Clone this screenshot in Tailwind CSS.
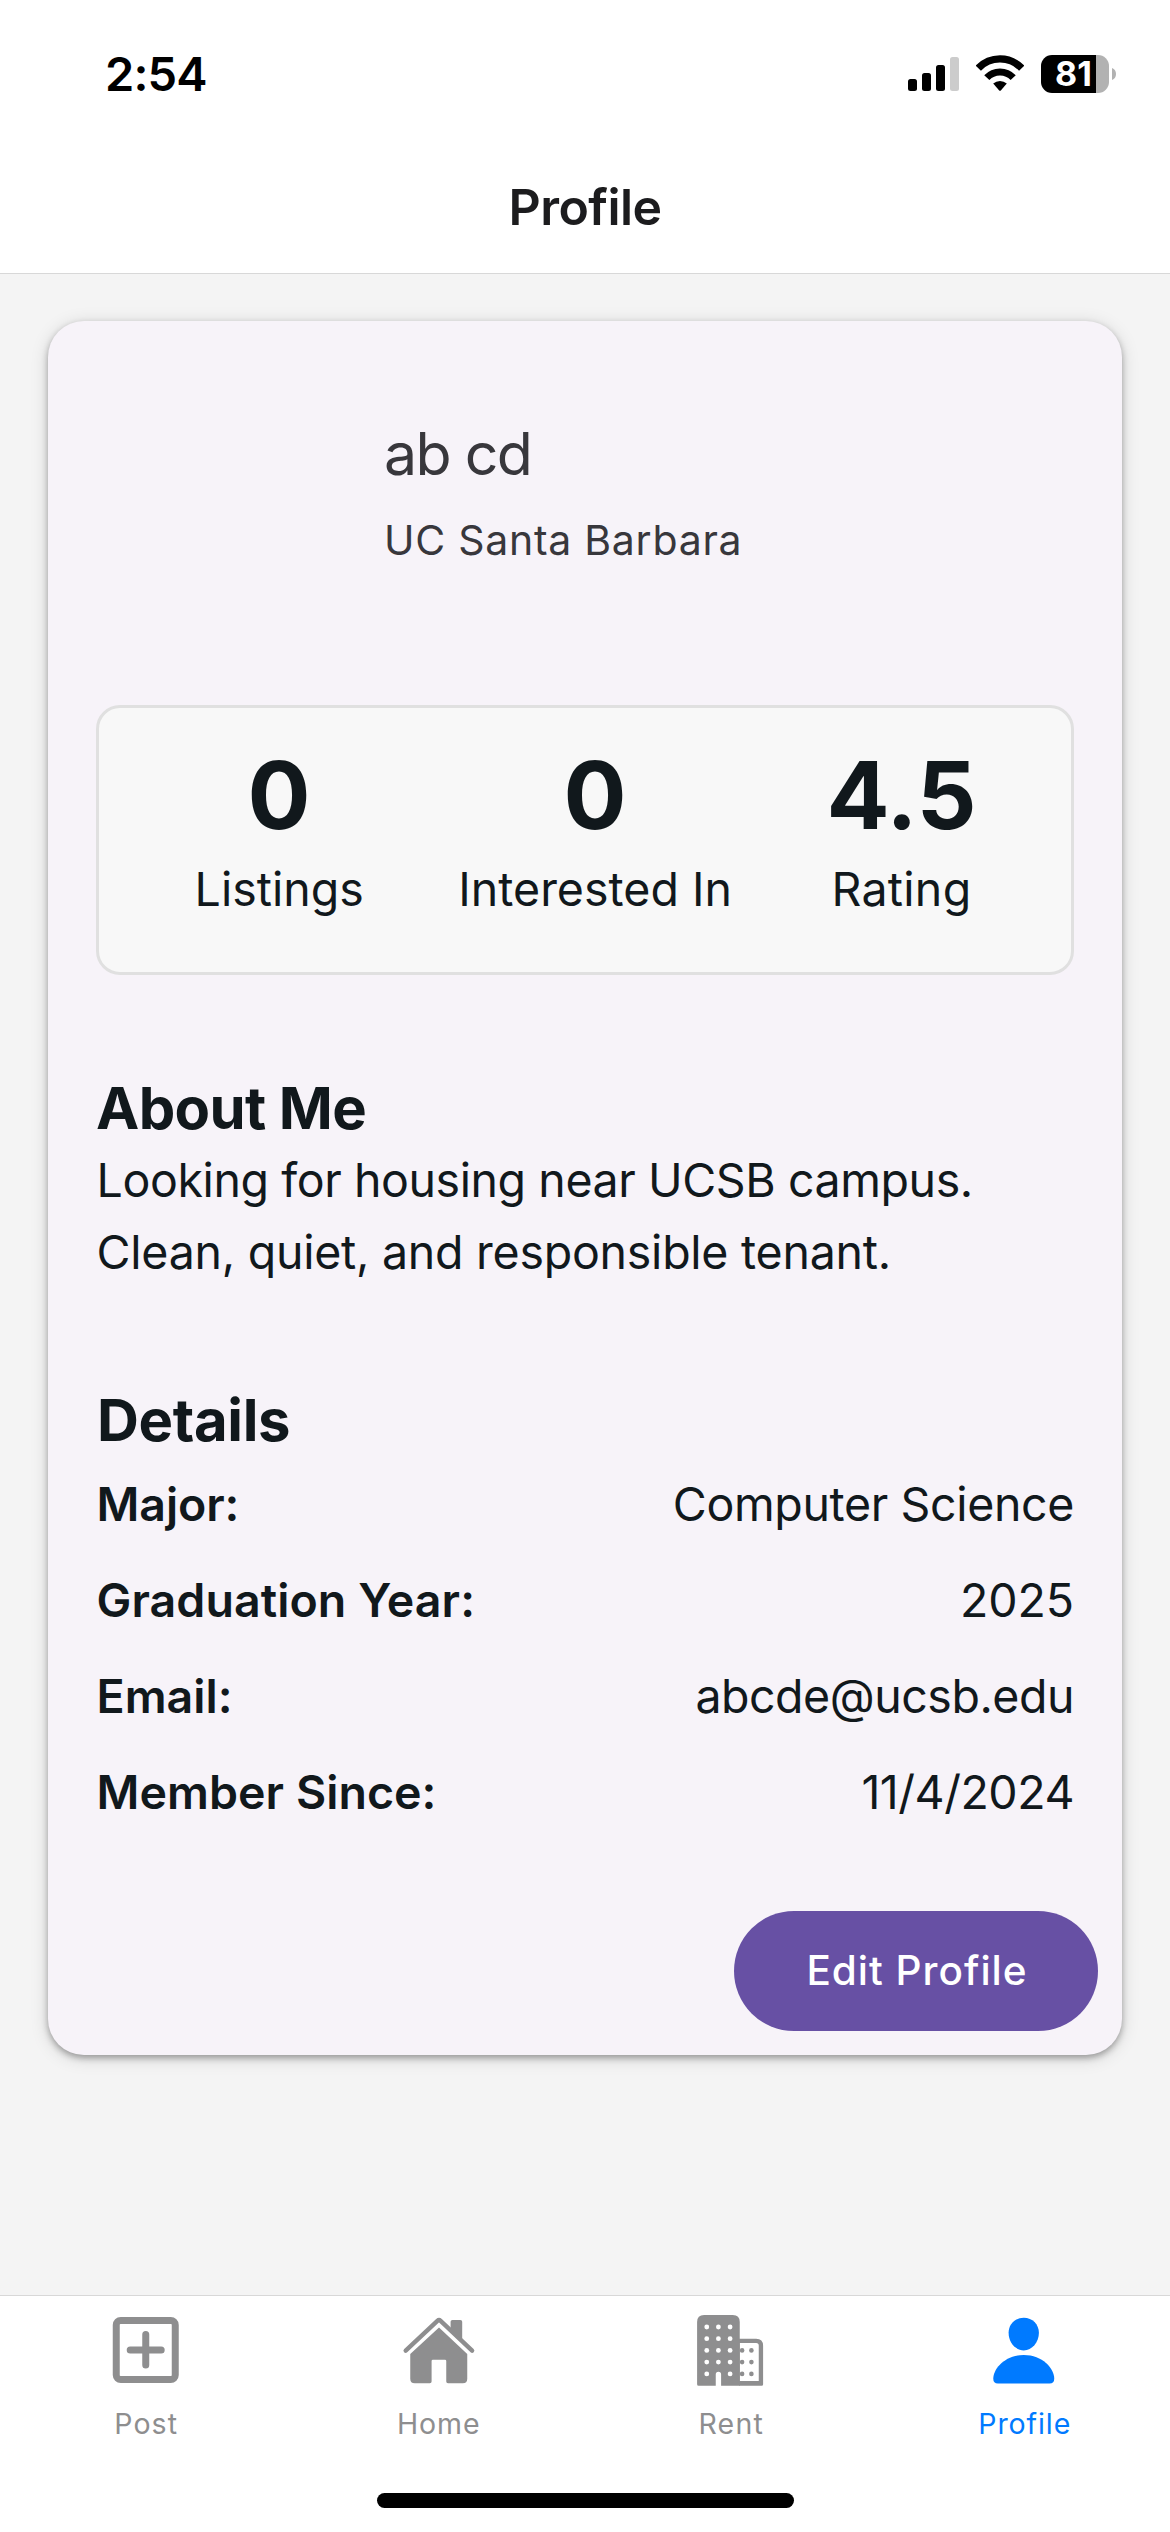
<!DOCTYPE html>
<html lang="en">
<head>
<meta charset="utf-8">
<title>Profile</title>
<script src="https://cdn.jsdelivr.net/npm/@tailwindcss/browser@4"></script>
</head>
<body class="font-['Inter',sans-serif] bg-white">
<div class="w-[1170px] h-[2532px] flex flex-col overflow-hidden bg-[#f4f4f4] text-[#11181c]">

  <!-- Status bar -->
  <div class="h-[141px] shrink-0 bg-white text-black flex items-start justify-between pl-[105px] pr-[54px]">
    <span class="mt-[44px] text-[47px] leading-[60px] font-semibold tracking-[-0.88px]">2:54</span>
    <div class="flex items-start mt-[55px]">
      <svg class="w-[51px] h-[34px] mt-[2px]" viewBox="0 0 51 34">
        <rect x="0" y="22" width="9" height="12" rx="2.5"/>
        <rect x="14" y="16" width="9" height="18" rx="2.5"/>
        <rect x="28" y="8" width="9" height="26" rx="2.5"/>
        <rect x="42" y="0" width="9" height="34" rx="2.5" fill="#cccccc"/>
      </svg>
      <svg class="w-[48px] h-[36px] ml-[17px]" viewBox="0 0 48 36">
        <g fill="none" stroke="#000">
          <path d="M2.3 13.2A30 30 0 0 1 45.7 13.2" stroke-width="7.3"/>
          <path d="M10.8 22.7A18 18 0 0 1 37.2 22.7" stroke-width="7"/>
        </g>
        <path d="M17.2 28.6A10.5 10.5 0 0 1 30.8 28.6L24.8 35.4Q24 36.2 23.2 35.4Z"/>
      </svg>
      <div class="ml-[17px] w-[68px] h-[38px] rounded-[11px] bg-linear-to-r from-black from-[81%] to-[#b2b2b2] to-[81%] text-white pl-[14px] text-[34px] leading-[38px] font-bold whitespace-nowrap">81</div>
      <svg class="w-[4px] h-[12px] ml-[3px] mt-[13px]" viewBox="0 0 4 12"><path d="M0 0Q4 1.5 4 6T0 12Z" fill="#b2b2b2"/></svg>
    </div>
  </div>

  <!-- Navigation header -->
  <div class="h-[133px] shrink-0 bg-white border-b border-[#d8d8d8] flex items-center justify-center">
    <h1 class="text-[50px] leading-[60px] font-semibold tracking-[-0.56px] text-[#1c1c1e]">Profile</h1>
  </div>

  <!-- Content -->
  <main class="flex-1 px-[48px] pt-[47px]">
    <div class="h-[1734px] rounded-[36px] bg-[#f7f3f9] shadow-[0_3px_18px_rgba(0,0,0,0.15),0_3px_6px_rgba(0,0,0,0.3)] flex flex-col pt-[91px] px-[48px]">
      <div class="pl-[288px] text-[#38373c]">
        <div class="text-[59px] leading-[84px] tracking-[-1.7px]">ab cd</div>
        <div class="mt-[14px] text-[41px] leading-[60px] tracking-[0.73px]">UC Santa Barbara</div>
      </div>

      <div class="mt-[135px] h-[270px] rounded-[24px] border-[3px] border-[#e0e0e0] bg-[#f8f8f8] flex justify-evenly pt-[28px] pl-px text-center">
        <div>
          <div class="text-[93.5px] leading-[118px] font-bold">0</div>
          <div class="text-[46.5px] leading-[70px]">Listings</div>
        </div>
        <div>
          <div class="text-[93.5px] leading-[118px] font-bold">0</div>
          <div class="text-[46.5px] leading-[70px]">Interested In</div>
        </div>
        <div>
          <div class="text-[93.5px] leading-[118px] font-bold tracking-[-0.21px]">4.5</div>
          <div class="text-[46.5px] leading-[70px] tracking-[0.3px]">Rating</div>
        </div>
      </div>

      <h2 class="mt-[97px] text-[58px] leading-[72px] font-bold tracking-[-0.62px]">About Me</h2>
      <p class="text-[46.5px] leading-[72px] whitespace-nowrap pl-[0.6px]"><span class="tracking-[-0.41px]">Looking for housing near UCSB campus.</span><br><span class="tracking-[-0.25px]">Clean, quiet, and responsible tenant.</span></p>

      <h2 class="mt-[96px] text-[58px] leading-[72px] font-bold tracking-[-0.34px] pl-px">Details</h2>
      <div class="mt-[12px] flex flex-col gap-[24px] text-[46.5px] leading-[72px] pl-[0.6px]">
        <div class="flex justify-between"><span class="font-semibold tracking-[-0.11px]">Major:</span><span class="tracking-[-0.36px]">Computer Science</span></div>
        <div class="flex justify-between"><span class="font-semibold tracking-[0.07px]">Graduation Year:</span><span class="tracking-[-0.08px]">2025</span></div>
        <div class="flex justify-between"><span class="font-semibold">Email:</span><span class="tracking-[-0.47px]">abcde@ucsb.edu</span></div>
        <div class="flex justify-between"><span class="font-semibold tracking-[0.05px]">Member Since:</span><span class="tracking-[-0.46px]">11/4/2024</span></div>
      </div>

      <button class="mt-[83px] -mr-[24px] self-end w-[364px] h-[120px] rounded-full bg-[#6750a4] text-white text-[40.5px] leading-[60px] font-medium tracking-[0.99px] pl-[2px]">Edit Profile</button>
    </div>
  </main>

  <!-- Tab bar -->
  <nav class="h-[237px] shrink-0 bg-white border-t border-[#d8d8d8] flex flex-col items-center">
    <div class="w-full grid grid-cols-4 pt-[12px] text-[28.5px] leading-[36px] text-[#8e8e8f]">
      <div class="flex flex-col items-center">
        <svg class="w-[84px] h-[84px]" viewBox="0 0 84 84" fill="currentColor">
          <path fill-rule="evenodd" d="M16.75 9H66.75A8 8 0 0 1 74.75 17V67A8 8 0 0 1 66.75 75H16.75A8 8 0 0 1 8.75 67V17A8 8 0 0 1 16.75 9ZM16.5 16Q15.75 16 15.75 16.8V67.2Q15.75 68 16.5 68H67Q67.75 68 67.75 67.2V16.8Q67.75 16 67 16Z"/>
          <path d="M26.2 42H57.2M41.75 26.5V57" fill="none" stroke="currentColor" stroke-width="7" stroke-linecap="round"/>
        </svg>
        <span class="mt-[14px] tracking-[1.14px]">Post</span>
      </div>
      <div class="flex flex-col items-center">
        <svg class="w-[84px] h-[84px]" viewBox="0 0 84 84" fill="currentColor">
          <path d="M8.7 42.7L40.4 12.9Q42 11.4 43.6 12.9L75.1 42.7" fill="none" stroke="currentColor" stroke-width="4.4" stroke-linecap="round" stroke-linejoin="round"/>
          <path d="M53.6 21.5V13.8Q53.6 12 55.4 12H63.4Q65.2 12 65.2 13.8V33Z"/>
          <path d="M42 19.5L70.25 46V70.8Q70.25 75.3 65.75 75.3H51Q49.25 75.3 49.25 73.5V53Q49.25 51.7 48 51.7H35.9Q34.6 51.7 34.6 53V73.5Q34.6 75.3 32.8 75.3H17.75Q13.25 75.3 13.25 70.8V46Z"/>
        </svg>
        <span class="mt-[14px] tracking-[0.92px]">Home</span>
      </div>
      <div class="flex flex-col items-center">
        <svg class="w-[84px] h-[84px]" viewBox="0 0 84 84" fill="currentColor">
          <path d="M15.1 7H43.75Q50.75 7 50.75 14V77.7H32.1V66.4A2.67 2.67 0 0 0 26.75 66.4V77.7H9.6Q8.1 77.7 8.1 76.2V14Q8.1 7 15.1 7Z"/>
          <path fill-rule="evenodd" d="M50 30.7H67.1Q74.1 30.7 74.1 37.7V76.2Q74.1 77.7 72.6 77.7H50ZM50.75 35.1V73H69.75V37.6Q69.75 35.1 67.2 35.1Z"/>
          <g fill="#fff">
            <circle cx="17.75" cy="19" r="2.4"/><circle cx="29.4" cy="19" r="2.4"/><circle cx="41.1" cy="19" r="2.4"/>
            <circle cx="17.75" cy="30.7" r="2.4"/><circle cx="29.4" cy="30.7" r="2.4"/><circle cx="41.1" cy="30.7" r="2.4"/>
            <circle cx="17.75" cy="42.4" r="2.4"/><circle cx="29.4" cy="42.4" r="2.4"/><circle cx="41.1" cy="42.4" r="2.4"/>
            <circle cx="17.75" cy="54.1" r="2.4"/><circle cx="29.4" cy="54.1" r="2.4"/><circle cx="41.1" cy="54.1" r="2.4"/>
            <circle cx="17.75" cy="65.9" r="2.4"/><circle cx="41.1" cy="65.9" r="2.4"/>
          </g>
          <circle cx="53.1" cy="42.4" r="2.3"/><circle cx="62.4" cy="42.4" r="2.3"/>
          <circle cx="53.1" cy="54.1" r="2.3"/><circle cx="62.4" cy="54.1" r="2.3"/>
          <circle cx="53.1" cy="65.9" r="2.3"/><circle cx="62.4" cy="65.9" r="2.3"/>
        </svg>
        <span class="mt-[14px] tracking-[1.21px]">Rent</span>
      </div>
      <div class="flex flex-col items-center text-[#007aff]">
        <svg class="w-[84px] h-[84px]" viewBox="0 0 84 84" fill="currentColor">
          <path d="M41.75 9.7C50.5 9.7 56.9 16.3 56.9 24.8C56.9 34.5 50 42.4 41.75 42.4S26.6 34.5 26.6 24.8C26.6 16.3 33 9.7 41.75 9.7Z"/>
          <path d="M41.75 47C60.5 47 72.25 60.5 72.25 70.8Q72.25 75.6 67.6 75.6H15.9Q11.25 75.6 11.25 70.8C11.25 60.5 23 47 41.75 47Z"/>
        </svg>
        <span class="mt-[14px] tracking-[0.9px] pl-[2px]">Profile</span>
      </div>
    </div>
    <div class="mt-[51px] w-[417px] h-[15px] rounded-full bg-black"></div>
  </nav>
</div>
</body>
</html>
